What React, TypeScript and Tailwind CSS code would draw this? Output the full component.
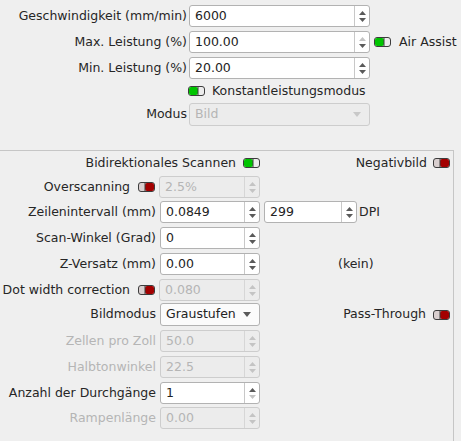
import React from "react";

const FONT = { fontFamily: '"DejaVu Sans", "Liberation Sans", sans-serif' };

function Toggle({ on }: { on: boolean }) {
  return (
    <svg width="18" height="10" viewBox="0 0 18 10" className="shrink-0">
      {on ? (
        <>
          <rect x="0.5" y="0.5" width="16" height="9" rx="2.5" fill="#ececec" stroke="#3c3c3c" />
          <rect x="1" y="1" width="9" height="8" rx="2" fill="#00c400" />
          <line x1="10" y1="1" x2="10" y2="9" stroke="#3c3c3c" strokeWidth="1" />
        </>
      ) : (
        <>
          <rect x="0.5" y="0.5" width="16" height="9" rx="2.5" fill="#d9cfcf" stroke="#3c3c3c" />
          <rect x="7" y="1" width="9" height="8" rx="2" fill="#a30000" />
          <line x1="7" y1="1" x2="7" y2="9" stroke="#3c3c3c" strokeWidth="1" />
        </>
      )}
    </svg>
  );
}

function Arrow({ up, dim }: { up: boolean; dim: boolean }) {
  return (
    <svg width="7" height="4" viewBox="0 0 7 4">
      <path d={up ? "M0 4 L3.5 0 L7 4 Z" : "M0 0 L3.5 4 L7 0 Z"} fill={dim ? "#c4c4c4" : "#5a5a5a"} />
    </svg>
  );
}

function Spin({
  value,
  width,
  disabled = false,
  upDim = false,
  downDim = false,
  h = "h-[22px]",
}: {
  value: string;
  width: string;
  disabled?: boolean;
  upDim?: boolean;
  downDim?: boolean;
  h?: string;
}) {
  return (
    <div
      className={`${width} ${h} flex shrink-0 rounded-[3px] border ${
        disabled ? "border-[#cdcdcd] bg-[#ececec] text-[#b5b5b5]" : "border-[#b2b2b2] bg-white text-[#232323]"
      }`}
    >
      <div className="flex flex-1 items-center pl-[5px]">{value}</div>
      <div
        className={`flex w-[15px] flex-col items-center justify-center gap-[3px] border-l ${
          disabled ? "border-[#d6d6d6]" : "border-[#c8c8c8]"
        }`}
      >
        <Arrow up dim={disabled || upDim} />
        <Arrow up={false} dim={disabled || downDim} />
      </div>
    </div>
  );
}

function Combo({ value, width, disabled = false }: { value: string; width: string; disabled?: boolean }) {
  return (
    <div
      className={`${width} flex h-[23px] shrink-0 items-center justify-between rounded-[3px] border pl-[5px] pr-[8px] ${
        disabled ? "border-[#cdcdcd] bg-[#ececec] text-[#b5b5b5]" : "border-[#b2b2b2] bg-[#fbfbfb] text-[#232323]"
      }`}
    >
      <span>{value}</span>
      <svg width="8" height="5" viewBox="0 0 8 5">
        <path d="M0 0 L4 5 L8 0 Z" fill={disabled ? "#c8c8c8" : "#5a5a5a"} />
      </svg>
    </div>
  );
}

function Label({ children, dim = false, w }: { children: React.ReactNode; dim?: boolean; w: string }) {
  return (
    <div className={`${w} flex shrink-0 items-center justify-end gap-[8px] ${dim ? "text-[#b5b5b5]" : ""}`}>
      {children}
    </div>
  );
}

export default function App() {
  const TL = "w-[187px]";
  const BL = "w-[156px]";
  return (
    <div
      className="h-[441px] w-[461px] overflow-hidden bg-[#efefef] text-[12.5px] leading-none text-[#262626]"
      style={FONT}
    >
      {/* oberer Bereich */}
      <div className="flex flex-col pt-[5px]">
        <div className="flex h-[22px] items-center gap-[2px]">
          <Label w={TL}>Geschwindigkeit (mm/min)</Label>
          <Spin value="6000" width="w-[181px]" />
        </div>
        <div className="mt-[4px] flex h-[22px] items-center gap-[2px]">
          <Label w={TL}>Max. Leistung (%)</Label>
          <Spin value="100.00" width="w-[181px]" upDim />
          <div className="ml-[2px] flex items-center gap-[7px]">
            <Toggle on />
            <span>Air Assist</span>
          </div>
        </div>
        <div className="mt-[4px] flex h-[22px] items-center gap-[2px]">
          <Label w={TL}>Min. Leistung (%)</Label>
          <Spin value="20.00" width="w-[181px]" />
        </div>
        <div className="mt-[4px] flex h-[16px] items-center gap-[6px] pl-[188px]">
          <Toggle on />
          <span>Konstantleistungsmodus</span>
        </div>
        <div className="mt-[4px] flex items-center gap-[2px]">
          <Label w={TL}>Modus</Label>
          <Combo value="Bild" width="w-[181px]" disabled />
        </div>
      </div>

      {/* unterer Bereich */}
      <div className="mt-[24px] h-[300px] w-[454px] border-r border-t border-[#c6c6c6]">
        <div className="mt-[4px] flex h-[16px] items-center">
          <div className="flex w-[261px] items-center justify-end gap-[7px]">
            <span>Bidirektionales Scannen</span>
            <Toggle on />
          </div>
          <div className="flex w-[190px] items-center justify-end gap-[6px]">
            <span>Negativbild</span>
            <Toggle on={false} />
          </div>
        </div>

        <div className="mt-[5px] flex h-[22px] items-center gap-[3px]">
          <Label w={BL}>
            <span>Overscanning</span>
            <Toggle on={false} />
          </Label>
          <Spin value="2.5%" width="w-[101px]" disabled />
        </div>

        <div className="mt-[3px] flex h-[22px] items-center gap-[4px]">
          <Label w={BL}>Zeilenintervall (mm)</Label>
          <Spin value="0.0849" width="w-[100px]" />
          <Spin value="299" width="w-[93px]" />
          <span className="-ml-[2px]">DPI</span>
        </div>

        <div className="mt-[4px] flex h-[22px] items-center gap-[4px]">
          <Label w={BL}>Scan-Winkel (Grad)</Label>
          <Spin value="0" width="w-[100px]" />
        </div>

        <div className="mt-[4px] flex h-[22px] items-center gap-[4px]">
          <Label w={BL}>Z-Versatz (mm)</Label>
          <Spin value="0.00" width="w-[100px]" />
          <span className="ml-[74px]">(kein)</span>
        </div>

        <div className="mt-[4px] flex h-[22px] items-center gap-[3px]">
          <Label w={BL}>
            <span>Dot width correction</span>
            <Toggle on={false} />
          </Label>
          <Spin value="0.080" width="w-[101px]" disabled />
        </div>

        <div className="mt-[2px] flex items-center gap-[4px]">
          <Label w={BL}>Bildmodus</Label>
          <Combo value="Graustufen" width="w-[100px]" />
          <div className="flex flex-1 items-center justify-end gap-[7px] pr-[2px]">
            <span>Pass-Through</span>
            <Toggle on={false} />
          </div>
        </div>

        <div className="mt-[4px] flex h-[22px] items-center gap-[4px]">
          <Label w={BL} dim>
            Zellen pro Zoll
          </Label>
          <Spin value="50.0" width="w-[100px]" disabled />
        </div>

        <div className="mt-[4px] flex h-[22px] items-center gap-[4px]">
          <Label w={BL} dim>
            Halbtonwinkel
          </Label>
          <Spin value="22.5" width="w-[100px]" disabled />
        </div>

        <div className="mt-[4px] flex h-[22px] items-center gap-[4px]">
          <Label w={BL}>Anzahl der Durchgänge</Label>
          <Spin value="1" width="w-[100px]" downDim />
        </div>

        <div className="mt-[3px] flex h-[22px] items-center gap-[4px]">
          <Label w={BL} dim>
            Rampenlänge
          </Label>
          <Spin value="0.00" width="w-[100px]" disabled />
        </div>
      </div>
    </div>
  );
}
